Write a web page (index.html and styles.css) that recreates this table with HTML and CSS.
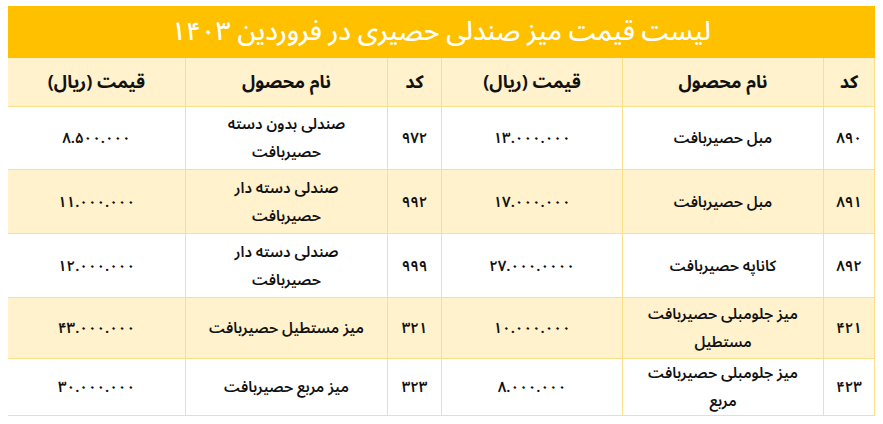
FILE: index.html
```html
<!DOCTYPE html>
<html lang="fa" dir="rtl">
<head>
<meta charset="utf-8">
<title>لیست قیمت میز صندلی حصیری</title>
<link rel="stylesheet" href="styles.css">
</head>
<body>
<table class="price-table">
  <colgroup>
    <col class="c-code">
    <col class="c-name">
    <col class="c-price">
    <col class="c-code2">
    <col class="c-name2">
    <col class="c-price2">
  </colgroup>
  <thead>
    <tr class="title-row">
      <th colspan="6" class="title">لیست قیمت میز صندلی حصیری در فروردین ۱۴۰۳</th>
    </tr>
    <tr class="head-row">
      <th>کد</th>
      <th>نام محصول</th>
      <th>قیمت (ریال)</th>
      <th>کد</th>
      <th>نام محصول</th>
      <th>قیمت (ریال)</th>
    </tr>
  </thead>
  <tbody>
    <tr class="row r1">
      <td>۸۹۰</td>
      <td>مبل حصیربافت</td>
      <td>۱۳.۰۰۰.۰۰۰</td>
      <td>۹۷۲</td>
      <td>صندلی بدون دسته<br>حصیربافت</td>
      <td>۸.۵۰۰.۰۰۰</td>
    </tr>
    <tr class="row r2 alt">
      <td>۸۹۱</td>
      <td>مبل حصیربافت</td>
      <td>۱۷.۰۰۰.۰۰۰</td>
      <td>۹۹۲</td>
      <td>صندلی دسته دار<br>حصیربافت</td>
      <td>۱۱.۰۰۰.۰۰۰</td>
    </tr>
    <tr class="row r3">
      <td>۸۹۲</td>
      <td>کاناپه حصیربافت</td>
      <td>۲۷.۰۰۰.۰۰۰۰</td>
      <td>۹۹۹</td>
      <td>صندلی دسته دار<br>حصیربافت</td>
      <td>۱۲.۰۰۰.۰۰۰</td>
    </tr>
    <tr class="row r4 alt">
      <td>۴۲۱</td>
      <td>میز جلومبلی حصیربافت<br>مستطیل</td>
      <td>۱۰.۰۰۰.۰۰۰</td>
      <td>۳۲۱</td>
      <td>میز مستطیل حصیربافت</td>
      <td>۴۳.۰۰۰.۰۰۰</td>
    </tr>
    <tr class="row r5">
      <td>۴۲۳</td>
      <td>میز جلومبلی حصیربافت<br>مربع</td>
      <td>۸.۰۰۰.۰۰۰</td>
      <td>۳۲۳</td>
      <td>میز مربع حصیربافت</td>
      <td>۳۰.۰۰۰.۰۰۰</td>
    </tr>
  </tbody>
</table>
</body>
</html>
```
FILE: styles.css
```css
html, body {
  background: #ffffff;
}
body {
  margin: 6px 8px 0 8px;
  font-family: "Noto Sans Arabic", "Noto Naskh Arabic", "DejaVu Sans", sans-serif;
  color: #111111;
}
.price-table {
  width: 867px;
  border-collapse: collapse;
  table-layout: fixed;
  direction: rtl;
}
.c-code { width: 51px; }
.c-name { width: 201px; }
.c-price { width: 181px; }
.c-code2 { width: 54px; }
.c-name2 { width: 202px; }
.c-price2 { width: 178px; }

.price-table th,
.price-table td {
  border: 1px solid #fbe08a;
  text-align: center;
  vertical-align: middle;
  padding: 0 4px;
}
.title-row .title {
  background: #ffc000;
  color: #ffffff;
  font-size: 26px;
  font-weight: 500;
  line-height: 36px;
  height: 50px;
  border-color: #ffc000;
  padding: 0;
}
.head-row th {
  background: #fff2cc;
  font-size: 18px;
  font-weight: 700;
  line-height: 28px;
  height: 48px;
}
.row td {
  font-size: 15px;
  font-weight: 600;
  line-height: 28px;
  background: #ffffff;
}
.row.alt td {
  background: #fff2cc;
}
.r1 td { height: 62px; }
.r2 td { height: 63px; }
.r3 td { height: 63px; }
.r4 td { height: 60px; }
.r5 td { height: 55px; }
```
